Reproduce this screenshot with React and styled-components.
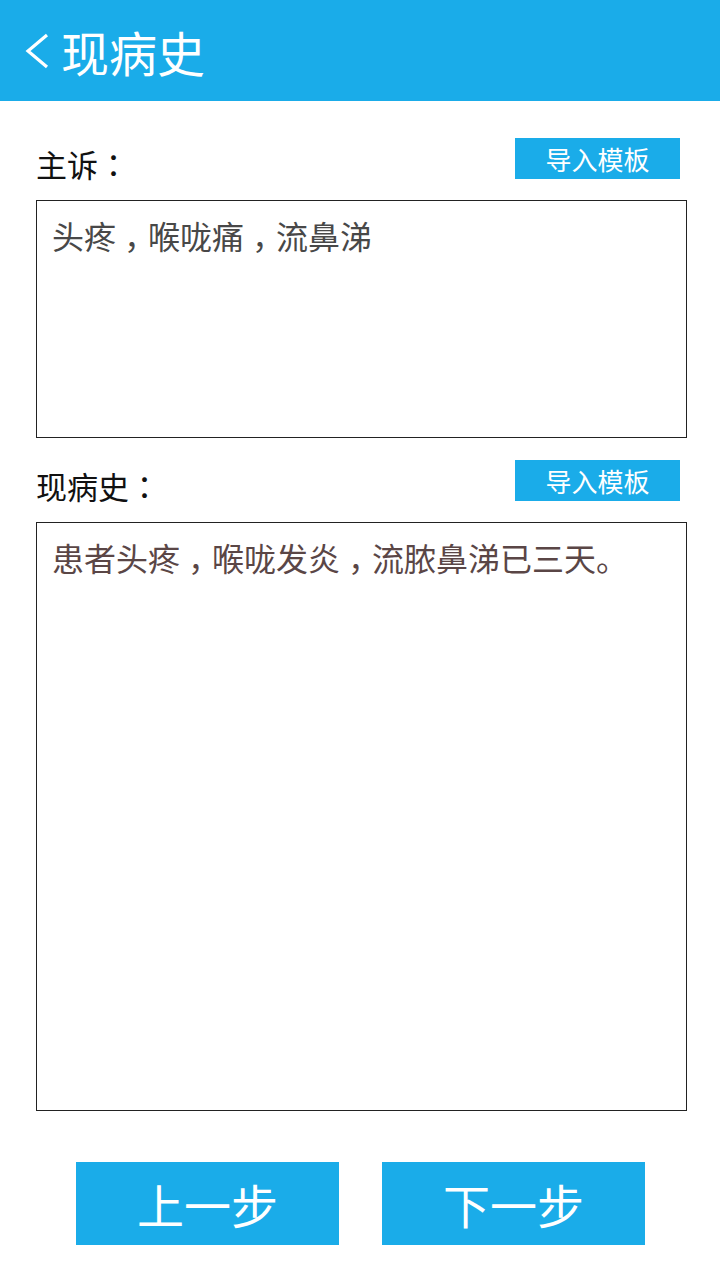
import React from "react";
import styled, { createGlobalStyle } from "styled-components";

const Global = createGlobalStyle`
  html, body {
    margin: 0;
    padding: 0;
    background: #ffffff;
    font-family: "Noto Sans CJK SC", "Noto Sans", sans-serif;
  }
`;

const Page = styled.div`
  width: 720px;
  height: 1280px;
  display: flex;
  flex-direction: column;
  background: #ffffff;
`;

const Header = styled.div`
  height: 101px;
  background: #1aace9;
  display: flex;
  align-items: center;
  padding-left: 25px;
  gap: 12px;
  color: #ffffff;
`;

const Title = styled.h1`
  margin: 0;
  font-size: 48px;
  font-weight: 400;
  line-height: 1;
  color: #ffffff;
`;

const Body = styled.div`
  display: flex;
  flex-direction: column;
  padding: 37px 33px 0 36px;
`;

const LabelRow = styled.div`
  display: flex;
  justify-content: space-between;
  align-items: center;
  height: 41px;
  margin-top: ${(p) => p.$top || 0}px;
`;

const Label = styled.span`
  font-size: 31px;
  color: #111111;
  line-height: 1;
  padding-top: 9px;
`;

/* colon drawn centred in its cell */
const Colon = styled.span`
  font-family: "Noto Sans CJK TC", "Noto Sans CJK SC", sans-serif;
`;

/* comma on the baseline, in the middle of its cell: half-width glyph, padded */
const Comma = styled.span`
  font-feature-settings: "halt" 1;
  padding: 0 0.25em;
`;

const SmallButton = styled.button`
  width: 165px;
  height: 41px;
  margin-right: 7px;
  border: none;
  background: #1aace9;
  color: #ffffff;
  font-family: inherit;
  font-size: 26px;
  padding: 0;
  line-height: 41px;
`;

const Field = styled.div`
  box-sizing: border-box;
  width: 651px;
  height: ${(p) => p.$h}px;
  margin-top: 21px;
  border: 1px solid #222222;
  padding: 12px 15px;
  font-size: 32px;
  line-height: 44px;
  color: ${(p) => p.$color};
  background: #ffffff;
  overflow: hidden;
`;

const Footer = styled.div`
  display: flex;
  justify-content: center;
  gap: 43px;
  margin-top: 51px;
  padding-left: 1px;
`;

const BigButton = styled.button`
  width: 263px;
  height: 83px;
  border: none;
  background: #1aace9;
  color: #ffffff;
  font-family: inherit;
  font-size: 47px;
  padding: 0;
`;

const Back = () => (
  <svg width="24" height="36" viewBox="0 0 24 36" fill="none">
    <polyline points="22,2 3,18 22,34" stroke="#ffffff" strokeWidth="3.2" />
  </svg>
);

const withPunct = (text) =>
  text.split(/([，：])/).map((part, i) => {
    if (part === "，") return <Comma key={i}>{part}</Comma>;
    if (part === "：") return <Colon key={i}>{part}</Colon>;
    return part;
  });

export default function App() {
  return (
    <Page>
      <Global />
      <Header>
        <Back />
        <Title>现病史</Title>
      </Header>
      <Body>
        <LabelRow>
          <Label>{withPunct("主诉：")}</Label>
          <SmallButton>导入模板</SmallButton>
        </LabelRow>
        <Field $h={238} $color="#484848">
          {withPunct("头疼，喉咙痛，流鼻涕")}
        </Field>
        <LabelRow $top={22}>
          <Label>{withPunct("现病史：")}</Label>
          <SmallButton>导入模板</SmallButton>
        </LabelRow>
        <Field $h={589} $color="#5a4646">
          {withPunct("患者头疼，喉咙发炎，流脓鼻涕已三天。")}
        </Field>
      </Body>
      <Footer>
        <BigButton>上一步</BigButton>
        <BigButton>下一步</BigButton>
      </Footer>
    </Page>
  );
}
